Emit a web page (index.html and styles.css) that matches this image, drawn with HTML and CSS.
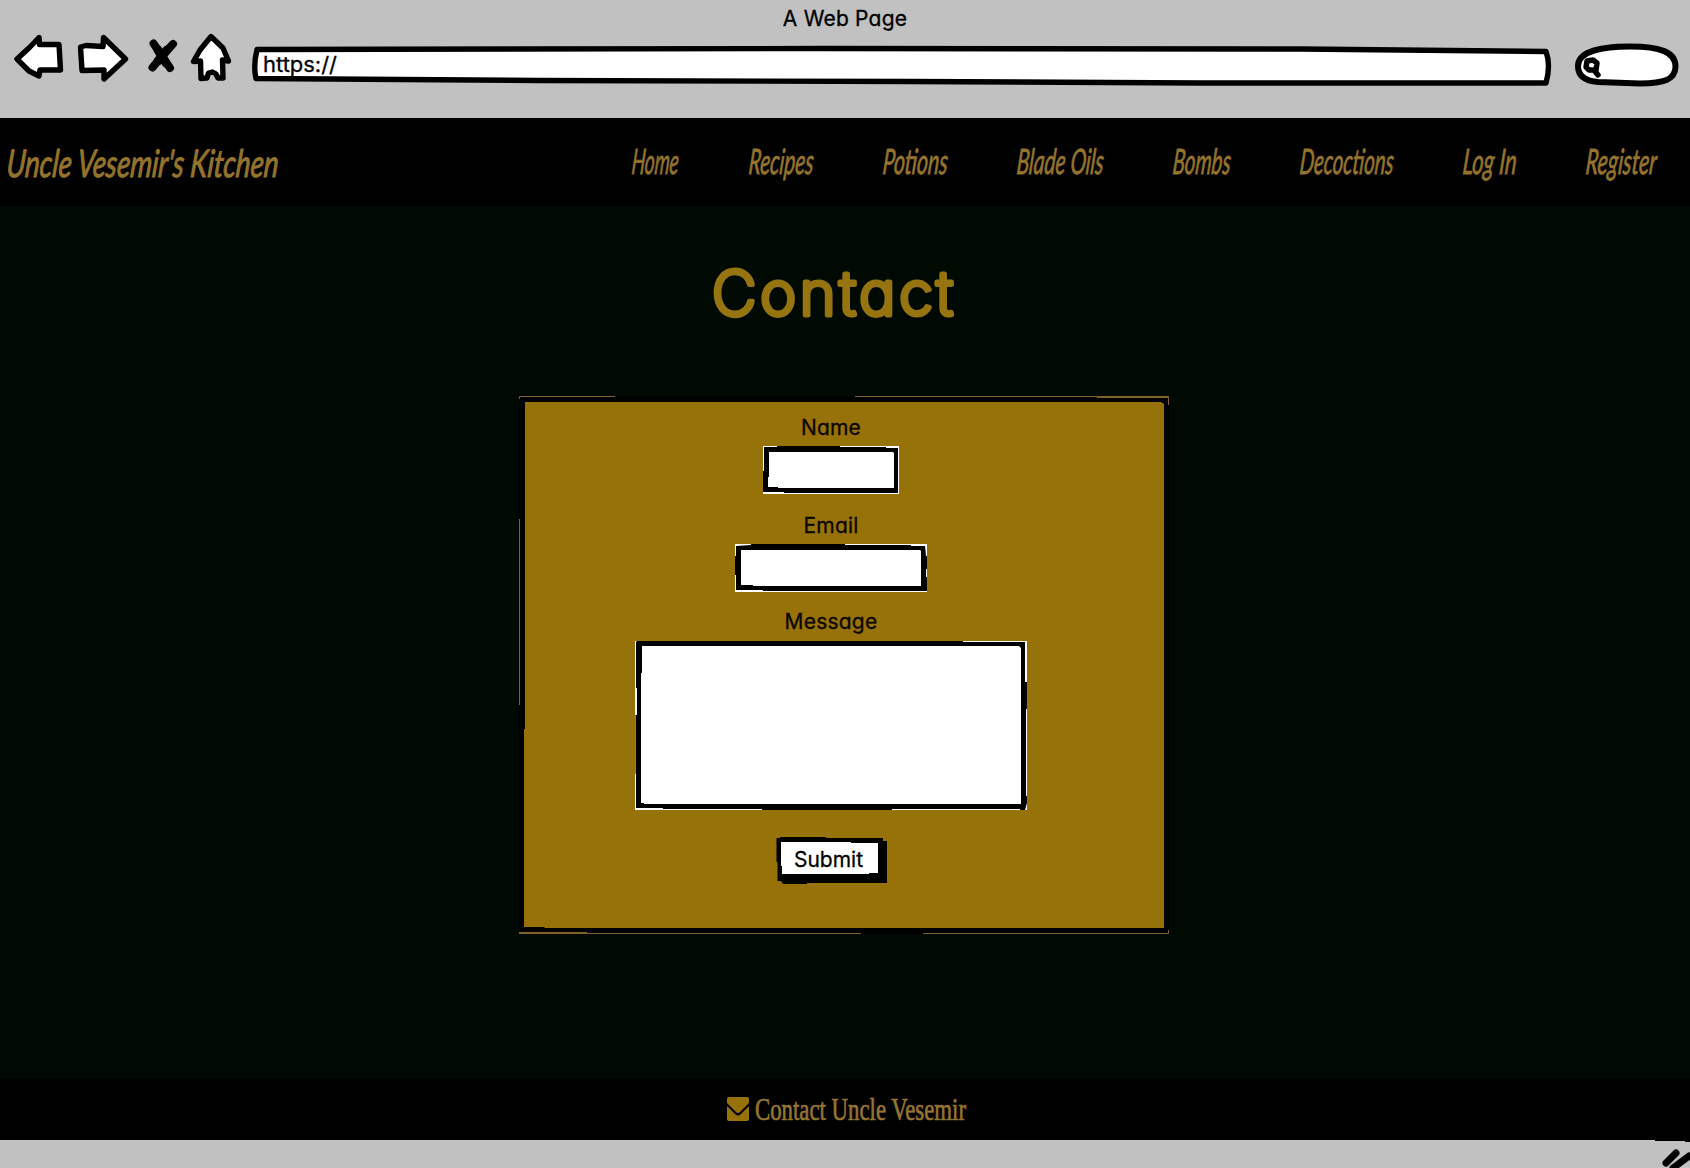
FILE: index.html
```html
<!DOCTYPE html>
<html lang="en">
<head>
<meta charset="utf-8">
<title>Uncle Vesemir's Kitchen - Contact</title>
<link rel="stylesheet" href="styles.css">
</head>
<body>
<header class="browser">
  <div class="browser-title">A Web Page</div>
  <div class="toolbar">
    <svg class="tool" width="60" height="60" viewBox="10 30 60 60"><path d="M17 59 30 47 39 37.500 39.500 44.500 59 44.500 60.500 70 40 70 39 76 29 71Z"/></svg>
    <svg class="tool" width="66" height="60" viewBox="70 30 66 60"><path d="M80.500 47 86 45.500 103 46.500 103.500 37.500 125.500 59 104 79 104 70 82 70.500Z"/></svg>
    <svg class="tool stop" width="50" height="60" viewBox="136 30 50 60"><path d="M153.500 43.500 162 56 170 68M173 44 162 56 152.500 67.500"/><path class="stop-core" d="M158 50 166 63M167 50 158 61"/></svg>
    <svg class="tool" width="54" height="60" viewBox="186 30 54 60"><path d="M211 36.500 200 50 193.500 61.500 200.500 61 201 78.500 207 78 208.500 73 212.500 72 216 74 218 78 223 78 222.500 60 228.500 61 223 48Z"/></svg>
    <svg class="tool" width="1322" height="60" viewBox="240 30 1322 60"><path d="M257 49.500 823 48.500 1300 49 1546 51.500Q1551 65 1546 83L1200 83 910 81.500 540 80.500 256 78.500Q253 66 257 49.500Z"/><text class="plain" x="263" y="71.500" textLength="74" lengthAdjust="spacingAndGlyphs">https://</text></svg>
    <svg class="tool" width="128" height="60" viewBox="1562 30 128 60"><path class="thick" d="M1578 66C1578 51 1603 46.500 1630 46.500C1660 46.500 1676 52 1675.500 67C1675 80 1664 83 1640 83.500L1598 82C1585 81 1578 76 1578 66Z"/><path d="M1586 67 1587 61 1593 60 1597 63 1596 70 1589 70ZM1594 70 1598 75"/></svg>
  </div>
</header>
<div class="site-bar">
  <svg class="script brand" width="273" height="88"><text x="0" y="59.500" textLength="272" lengthAdjust="spacingAndGlyphs">Uncle Vesemir's Kitchen</text></svg>
  <nav class="links">
    <svg class="script" width="48" height="88"><text y="56.500" textLength="47" lengthAdjust="spacingAndGlyphs">Home</text></svg>
    <svg class="script" width="65" height="88"><text y="56.500" textLength="65" lengthAdjust="spacingAndGlyphs">Recipes</text></svg>
    <svg class="script" width="65" height="88"><text y="56.500" textLength="65" lengthAdjust="spacingAndGlyphs">Potions</text></svg>
    <svg class="script" width="87" height="88"><text y="56.500" textLength="87" lengthAdjust="spacingAndGlyphs">Blade Oils</text></svg>
    <svg class="script" width="58" height="88"><text y="56.500" textLength="58" lengthAdjust="spacingAndGlyphs">Bombs</text></svg>
    <svg class="script" width="94" height="88"><text y="56.500" textLength="94" lengthAdjust="spacingAndGlyphs">Decoctions</text></svg>
    <svg class="script" width="54" height="88"><text y="56.500" textLength="54" lengthAdjust="spacingAndGlyphs">Log In</text></svg>
    <svg class="script" width="71" height="88"><text y="56.500" textLength="71" lengthAdjust="spacingAndGlyphs">Register</text></svg>
  </nav>
</div>
<main class="page">
  <svg class="heading" width="250" height="80" role="heading" aria-level="1"><text x="3" y="67.500" textLength="241" lengthAdjust="spacing">Contact</text></svg>
  <form class="card">
    <svg class="sketch" width="650" height="538" viewBox="519 396 650 538">
      <path class="ink" d="M519 396H1169V934H519Z"/>
      <path class="gold" d="M525 402H1161L1164 404V928H545L544 927H524V729H525Z"/>
      <path class="edge" d="M519.500 399V396.500H615M855 396.500H1169M1097 397.500H1168.500V405M519.500 519V705M519 932.500H587M519 933.500H861M923 933.500H1168.500V930"/>
    </svg>
    <label class="label name-label">Name</label>
    <svg class="field" width="136" height="48" viewBox="763 446 136 48"><path class="paper" d="M763 446H899V494H763Z"/><path class="ink" fill-rule="evenodd" d="M764 447H777V446H840V447H886V448H898V493H784V492H763V471H764ZM769 452H893L894 453V488H778V487H768V477H769Z"/></svg>
    <label class="label email-label">Email</label>
    <svg class="field" width="192" height="48" viewBox="735 544 192 48"><path class="paper" d="M735 544H927V592H735Z"/><path class="ink" fill-rule="evenodd" d="M736 546 751 545V544H845V545H911V546H925L926 556H927V569H926V577H927V591H763V590H736V575H735V556H736ZM741 550H920L921 551V586H753V585H741Z"/></svg>
    <label class="label message-label">Message</label>
    <svg class="field" width="392" height="169" viewBox="635 641 392 169"><path class="paper" d="M635 641H1027V810H635Z"/><path class="ink" fill-rule="evenodd" d="M637 641H963V642H1025V682H1027V709H1026V796H1027V803L1025 810H1020V809H892V810H762V809H663V808H636V774H635.500V715H637V688H636V642ZM642 646H1019L1021 648V804H644V803H641V673H642Z"/></svg>
    <svg class="submit" width="111" height="48" viewBox="776 836 111 48" role="button"><path class="ink" d="M776.500 838H780V837H826V838H883V841H887V883H807V884H783L781 881H777.500V862H776.500Z"/><path class="paper" d="M781 842H851V843H878V873H869V874H782V866H781Z"/><text class="plain" x="794" y="866.500" textLength="69" lengthAdjust="spacingAndGlyphs">Submit</text></svg>
  </form>
</main>
<footer class="footer">
  <svg width="23" height="25" viewBox="0 0 23 25"><path class="gold" d="M2 0H20Q22 0 22 2V6L13 15Q11 17 9 15L0 6V2Q0 0 2 0ZM0 9 8 17Q11 20 14 17L22 9V22Q22 24 20 24H2Q0 24 0 22Z"/></svg>
  <svg class="contact-link" width="212" height="40"><text x="0" y="31" textLength="211" lengthAdjust="spacingAndGlyphs">Contact Uncle Vesemir</text></svg>
</footer>
<div class="status-bar">
  <svg width="90" height="30" viewBox="1600 1138 90 30"><path class="ink" d="M1655 1138H1690V1142H1685V1141H1655Z"/><path class="slash" d="M1666 1163 1676 1153M1673 1168 1689 1156"/></svg>
</div>
</body>
</html>
```

FILE: styles.css
```css
* { box-sizing: border-box; }
body {
  margin: 0;
  width: 1690px;
  height: 1168px;
  display: flex;
  flex-direction: column;
  overflow: hidden;
  background: #000a03;
  font-family: Inter, "Liberation Sans", sans-serif;
  font-feature-settings: "cv11";
}
svg { display: block; flex: none; }
.ink { fill: #000; }
.paper { fill: #fff; }
.gold { fill: #967208; }
.edge { fill: none; stroke: #80622a; stroke-width: 1; }

.browser { height: 118px; background: #c1c1c1; }
.browser-title {
  height: 30px;
  padding-top: 5px;
  text-align: center;
  font-size: 21px;
  line-height: 27px;
  letter-spacing: 0.2px;
  -webkit-text-stroke: 0.3px #000;
}
.toolbar { display: flex; padding-left: 10px; }
.tool path {
  fill: #fff;
  stroke: #000;
  stroke-width: 5.4;
  stroke-linejoin: round;
  stroke-linecap: round;
}
.tool .thick { stroke-width: 6; }
.stop path { fill: none; stroke-width: 8; }
.stop .stop-core { stroke-width: 9; }
.plain { font-size: 21px; fill: #000; stroke: #000; stroke-width: 0.3; }

.site-bar {
  height: 88px;
  padding: 0 33px 0 7px;
  display: flex;
  justify-content: space-between;
  background: #000;
}
.links { display: flex; gap: 69px; }
.script {
  overflow: visible;
  transform: skewX(-5deg);
  font: italic 400 35px Lato, "Liberation Sans", sans-serif;
  fill: #94732c;
  stroke: #94732c;
  stroke-width: 0.8;
}
.brand { font-size: 38px; stroke-width: 1; }

.page {
  height: 873px;
  display: flex;
  flex-direction: column;
  align-items: center;
}
.heading {
  margin: 41px 22px 0 0;
  overflow: visible;
  font-size: 61px;
  font-weight: 200;
  fill: #967510;
  stroke: #967510;
  stroke-width: 5;
  stroke-linejoin: round;
}
.card {
  position: relative;
  width: 650px;
  height: 538px;
  margin: 69px 0 0 -2px;
  padding-right: 26px;
  display: flex;
  flex-direction: column;
  align-items: center;
}
.sketch { position: absolute; inset: 0; }
.label, .field, .submit { position: relative; }
.label {
  height: 50px;
  padding-top: 19px;
  font-size: 21px;
  line-height: 26px;
  letter-spacing: 0.2px;
  color: #0b0600;
  -webkit-text-stroke: 0.3px #0b0600;
}
.message-label { height: 49px; padding-top: 17px; }
.submit { margin-top: 26px; }

.footer {
  height: 61px;
  padding: 0 0 0 3px;
  display: flex;
  justify-content: center;
  align-items: center;
  gap: 5px;
  background: #000;
}
.contact-link {
  overflow: visible;
  margin-top: -2px;
  font: 31px "Liberation Serif", serif;
  fill: #967430;
  stroke: #967430;
  stroke-width: 0.7;
}
.status-bar {
  height: 28px;
  display: flex;
  justify-content: flex-end;
  align-items: flex-end;
  background: #c1c1c1;
}
.slash { fill: none; stroke: #000; stroke-width: 7; stroke-linecap: round; }
```
